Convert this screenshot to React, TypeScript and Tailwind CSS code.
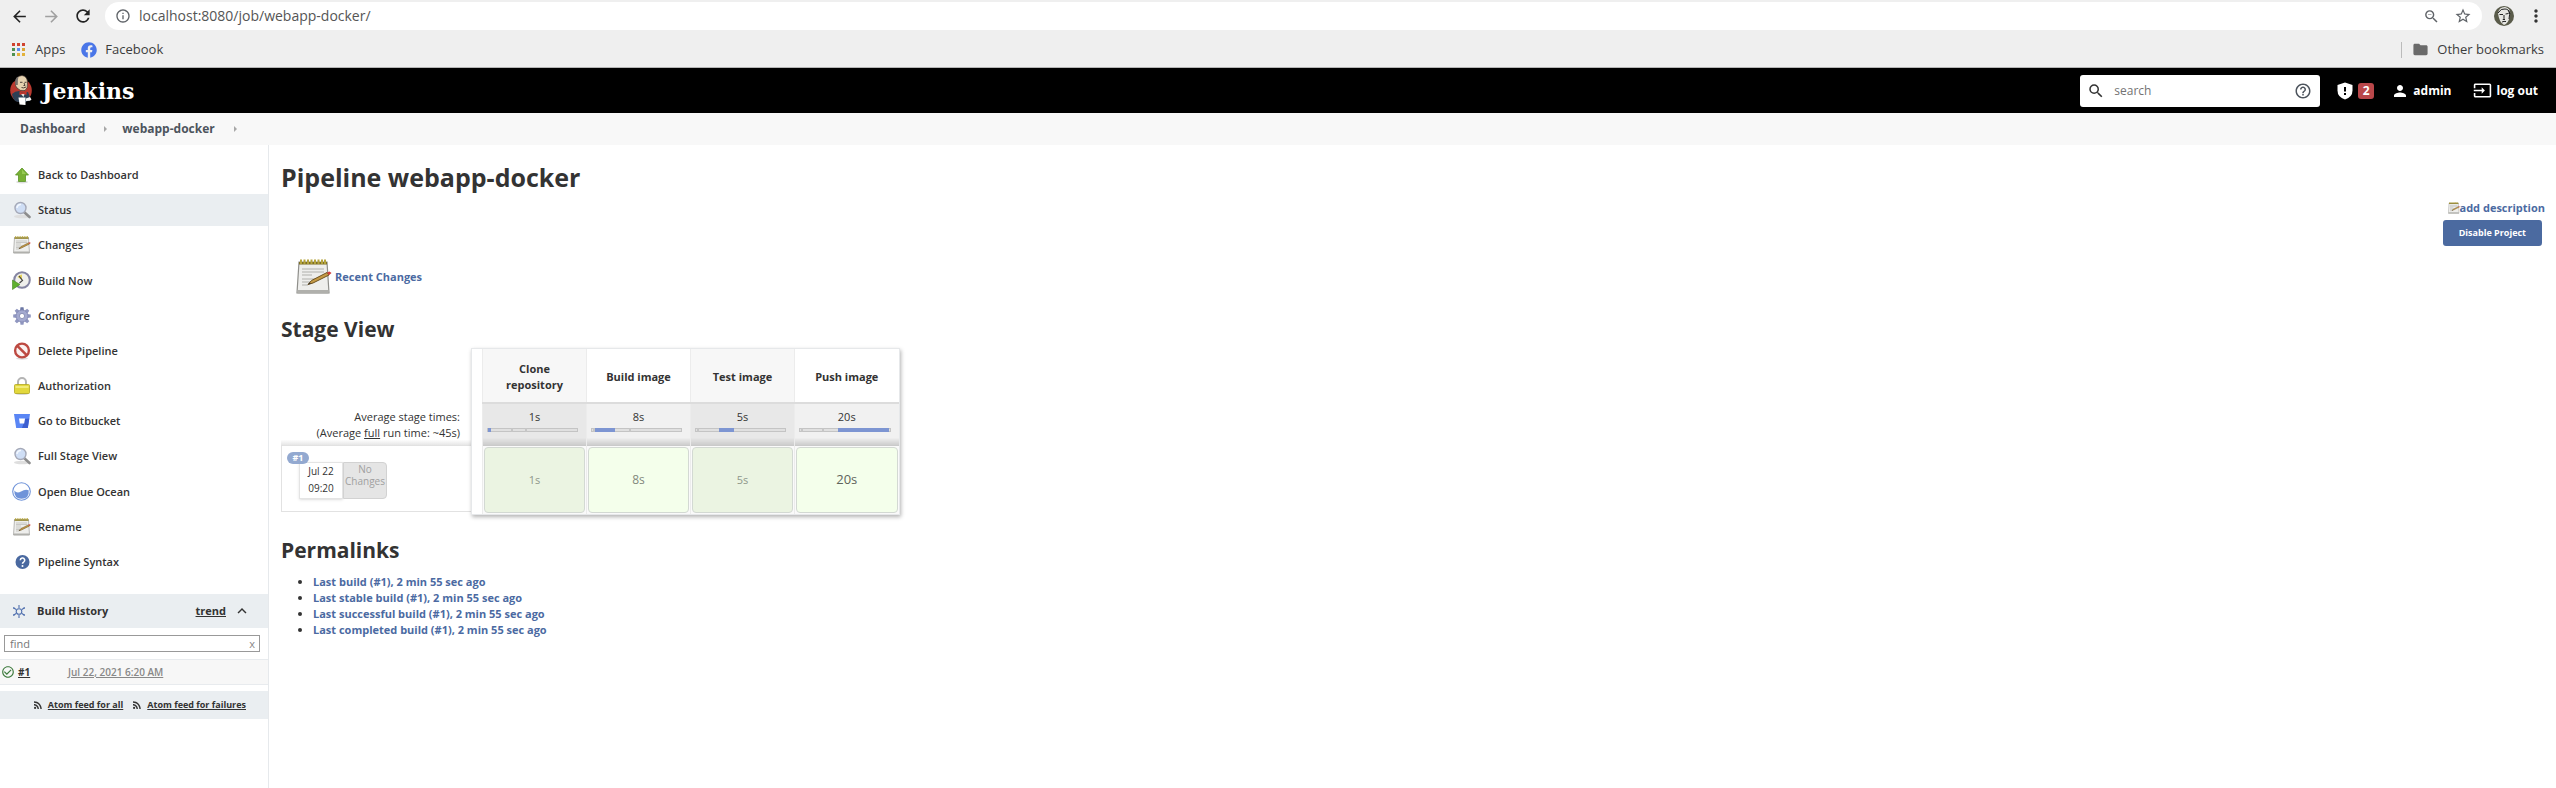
import type { ReactNode } from "react";
import {
  MdArrowBack,
  MdArrowForward,
  MdRefresh,
  MdInfoOutline,
  MdZoomOut,
  MdStarBorder,
  MdMoreVert,
  MdFolder,
  MdSearch,
  MdHelpOutline,
  MdPerson,
  MdRssFeed,
  MdInput,
  MdCheckCircleOutline,
  MdKeyboardArrowUp,
} from "react-icons/md";
import { FaFacebook } from "react-icons/fa";

const small = "h-[18px] w-[18px]";
const large = "h-[19px] w-[19px]";

function AppsGrid() {
  const colors = ["#d0432f", "#d0432f", "#d0432f", "#4f9150", "#5b8def", "#dba636", "#4f9150", "#e3b23b", "#e3b23b"];
  return (
    <svg viewBox="0 0 13 13" className="h-[13px] w-[13px]">
      {colors.map((c, i) => (
        <rect key={i} x={(i % 3) * 5} y={Math.floor(i / 3) * 5} width="3" height="3" fill={c} />
      ))}
    </svg>
  );
}

function Butler() {
  return (
    <svg viewBox="0 0 22 31" className="h-[31px] w-[22px]">
      <ellipse cx="11" cy="15.500" rx="10.800" ry="11.500" fill="#b8392f" />
      <path d="M2 19 Q5 16 9 16 L13 18 L18 17 Q20 20 19.500 25 L16 27 H8 Q3 26 2 19Z" fill="#2d4055" />
      <path d="M10 18 L12.500 19 L15 18 L13.500 22Z" fill="#e8e4df" />
      <path d="M5.500 8 Q5.500 1 12 0.500 Q17.500 1 17.500 8 Q18 13.500 15 15.500 Q10 16.500 7 13 Q5 11 5.500 8Z" fill="#e6d2b0" stroke="#3b302b" strokeWidth=".7" />
      <path d="M5.500 10 Q4 3 8.500 1.500 Q7.500 5 7.800 10Z" fill="#77716d" />
      <path d="M10 7.300h2.500M14.500 7.300h2M11.500 12.500q2 1 4.500-.5M14 8l1 2.500h-1.500" stroke="#3b302b" strokeWidth=".9" fill="none" />
      <path d="M9.500 16.500l3.500 1.500 3.500-1.500v3.500l-3.500-1.200-3.500 1.200Z" fill="#c5352c" />
      <path d="M8.500 22.500h7v7.500l-6-.5Z" fill="#fff" />
      <path d="M16 23.500l4-1.500 1.500 2.500-1.500 1.200-4 .3Z" fill="#f4f4f4" />
    </svg>
  );
}

function Avatar() {
  return (
    <svg viewBox="0 0 20 20" className="h-5 w-5">
      <circle cx="10" cy="10" r="10" fill="#5a5b4a" />
      <path d="M4 7q1-6 7-6 6 1 5 8-1 8-6 10-5-3-6-12Z" fill="#e6e6e2" />
      <path d="M4 7q3-5 7-4 4 0 5 5M5.500 8.500H9M11.500 8l3-.5M10 9v3.500l-1 1h2M8 16q2-1 4-.5M14.500 4q2 4 .5 9" stroke="#222" strokeWidth="1" fill="none" />
    </svg>
  );
}

function ShieldIcon() {
  return (
    <svg viewBox="0 0 16 18" className="h-[18px] w-4">
      <path d="M8 0.500 15.500 3v5.500Q15.500 15 8 17.500.5 15 .5 8.500V3Z" fill="#fff" />
      <path d="M7 5h2v4.500H7zM7 11h2v2H7z" fill="#000" />
    </svg>
  );
}

function UpArrowIcon() {
  return (
    <svg viewBox="0 0 18 18" className={small}>
      <ellipse cx="9" cy="16" rx="6" ry="1.500" fill="#ddd" />
      <path d="M9 2 15.500 9H12.500V15.500H5.500V9H2.500Z" fill="#79b135" stroke="#5a9426" strokeWidth=".8" />
      <path d="M9 3.500 13 8H9Z" fill="#98cb55" />
    </svg>
  );
}

function SearchGlassIcon() {
  return (
    <svg viewBox="0 0 18 18" className={small}>
      <ellipse cx="9" cy="15.500" rx="8" ry="1.800" fill="#dedede" />
      <path d="M11 11 16.500 16" stroke="#8d8d8d" strokeWidth="2.600" strokeLinecap="round" />
      <circle cx="7.500" cy="7" r="5.500" fill="#cfdef5" stroke="#a5a9b8" strokeWidth="1.400" />
      <path d="M4 7a3.500 3.500 0 0 1 4-3.500" stroke="#f3f8ff" strokeWidth="1.500" fill="none" />
    </svg>
  );
}

function NotepadIcon({ className = small }: { className?: string }) {
  return (
    <svg viewBox="0 0 36 36" className={className}>
      <path d="M3 3H31L33 34H1Z" fill="#eeeeec" stroke="#8f8f8b" strokeWidth="1.200" />
      <path d="M1.500 31H32.500V34.500H1.500Z" fill="#b0b0ac" />
      <path d="M3 3H31V5.500H3Z" fill="#7d6f24" />
      <path d="M5 .5V5M8.500 .5V5M12 .5V5M15.500 .5V5M19 .5V5M22.500 .5V5M26 .5V5M29 .5V5" stroke="#b5a43c" strokeWidth="2" />
      <path d="M6 10H28M6 13H28M6 16H16M6 20H20M6 23H15M6 26H12" stroke="#b0b0ac" strokeWidth="1.200" />
      <path d="M12 25.500 15.500 21.500 31 13.500 33 16 17 24Z" fill="#c59a45" stroke="#6e5220" strokeWidth="1" />
      <path d="M31 13.500 33.500 12.500 35.500 14 33 16.200Z" fill="#d0403b" />
      <path d="M12 25.500 13.500 23.500 15 24.700Z" fill="#333" />
    </svg>
  );
}

function ClockPlayIcon() {
  return (
    <svg viewBox="0 0 19 19" className={large}>
      <circle cx="10" cy="9" r="7.800" fill="#f0f0ec" stroke="#8585a2" strokeWidth="2" />
      <path d="M10 9V3.500A5.500 5.500 0 0 0 5.500 6Z" fill="#e6d25c" />
      <path d="M7 5l3.500 4.500L7.500 12" stroke="#444" strokeWidth="1.200" fill="none" />
      <path d="M0.500 9 8 13.500 0.500 18.500Z" fill="#5fb02f" stroke="#43871e" strokeWidth=".6" />
    </svg>
  );
}

function GearIcon() {
  const teeth = [0, 45, 90, 135, 180, 225, 270, 315];
  return (
    <svg viewBox="0 0 18 18" className={small}>
      {teeth.map((a) => (
        <path key={a} d="M7 4 7.500 .2H10.500L11 4Z" fill={a === 0 ? "#6a76a3" : "#9097c0"} transform={`rotate(${a} 9 9)`} />
      ))}
      <circle cx="9" cy="9" r="6" fill="#a3a9cf" stroke="#858cb5" strokeWidth=".8" />
      <circle cx="9" cy="9" r="2.600" fill="#fff" stroke="#7c83ab" strokeWidth=".8" />
    </svg>
  );
}

function ForbiddenIcon() {
  return (
    <svg viewBox="0 0 18 18" className={small}>
      <ellipse cx="9" cy="16.500" rx="6" ry="1.200" fill="#ddd" />
      <circle cx="9" cy="8.500" r="6.900" fill="#fbf3f2" stroke="#bd4a42" strokeWidth="2.400" />
      <path d="M4.300 3.800 13.700 13.200" stroke="#bd4a42" strokeWidth="2.600" />
    </svg>
  );
}

function LockIcon() {
  return (
    <svg viewBox="0 0 18 18" className={small}>
      <ellipse cx="9" cy="16.500" rx="7" ry="1.300" fill="#ccc" />
      <path d="M5 8V5a4 4 0 0 1 8 0V8" stroke="#b4b4b4" strokeWidth="2" fill="none" />
      <rect x="1.500" y="7.500" width="15" height="9" rx="1" fill="#e2d83c" stroke="#b3a71f" strokeWidth=".8" />
      <path d="M2.500 9h13v2h-13Z" fill="#f2eb79" />
    </svg>
  );
}

function BucketIcon() {
  return (
    <svg viewBox="0 0 18 18" className={small}>
      <path d="M1 2H17L14.800 16H3.200Z" fill="#5a86f5" />
      <path d="M17 2 14.800 16H9L12 7 16.200 6.500Z" fill="#3d5fd0" />
      <path d="M6 6.500H12L11.200 11.500H6.800Z" fill="#fff" />
    </svg>
  );
}

function OceanIcon() {
  return (
    <svg viewBox="0 0 19 19" className={large}>
      <circle cx="9.500" cy="9.500" r="8.800" fill="#fff" stroke="#6f93d9" strokeWidth="1.100" />
      <path d="M2.300 8.500Q5 12 9 9.500T16.700 8.200Q17.500 16.500 9.500 16.800 2 16.500 2.300 8.500Z" fill="#6f93d9" />
    </svg>
  );
}

function HelpIcon() {
  return (
    <svg viewBox="0 0 18 18" className={small}>
      <circle cx="9.500" cy="9" r="7" fill="#4a69a0" />
      <path d="M7.300 7.200a2.200 2.200 0 1 1 3.300 1.900q-1.100.6-1.100 1.700" stroke="#fff" strokeWidth="1.600" fill="none" />
      <circle cx="9.500" cy="12.900" r="1" fill="#fff" />
    </svg>
  );
}

function SunIcon() {
  return (
    <svg viewBox="0 0 12 13" className="h-[13px] w-3">
      <g fill="none" stroke="#4f6fae" strokeWidth="1.100">
        <circle cx="6" cy="6.500" r="2.800" />
        <path d="M6 0v3M6 10v3M1 3l2 1.500M11 3l-2 1.500M1 10l2-1.500M11 10 9 8.500M.8 2v2M11.200 2v2M.8 9v2M11.200 9v2" />
      </g>
    </svg>
  );
}

type Task = { label: string; icon: ReactNode; active?: boolean };

const tasks: Task[] = [
  { label: "Back to Dashboard", icon: <UpArrowIcon /> },
  { label: "Status", icon: <SearchGlassIcon />, active: true },
  { label: "Changes", icon: <NotepadIcon /> },
  { label: "Build Now", icon: <ClockPlayIcon /> },
  { label: "Configure", icon: <GearIcon /> },
  { label: "Delete Pipeline", icon: <ForbiddenIcon /> },
  { label: "Authorization", icon: <LockIcon /> },
  { label: "Go to Bitbucket", icon: <BucketIcon /> },
  { label: "Full Stage View", icon: <SearchGlassIcon /> },
  { label: "Open Blue Ocean", icon: <OceanIcon /> },
  { label: "Rename", icon: <NotepadIcon /> },
  { label: "Pipeline Syntax", icon: <HelpIcon /> },
];

type Stage = { name: string; time: string; from: number; to: number; ticks: number[]; run: string };

const stages: Stage[] = [
  { name: "Clone repository", time: "1s", from: 0, to: 3, ticks: [26, 42], run: "text-[11px] text-[#8f978b]" },
  { name: "Build image", time: "8s", from: 3, to: 26, ticks: [1, 42], run: "text-xs text-[#83897d]" },
  { name: "Test image", time: "5s", from: 26, to: 43, ticks: [1], run: "text-[11px] text-[#8f978b]" },
  { name: "Push image", time: "20s", from: 43, to: 100, ticks: [1, 25], run: "text-[13px] text-[#5f645b]" },
];

const permalinks = [
  "Last build (#1), 2 min 55 sec ago",
  "Last stable build (#1), 2 min 55 sec ago",
  "Last successful build (#1), 2 min 55 sec ago",
  "Last completed build (#1), 2 min 55 sec ago",
];

function BrowserBar() {
  return (
    <div className="border-b border-[#b5b5b5] bg-[#efefef] text-[13px] text-[#3c3c3c]">
      <div className="flex h-8 items-center pr-[10px] pl-[10px]">
        <button aria-label="Back" className="text-[#222]"><MdArrowBack size={19} /></button>
        <button aria-label="Forward" className="ml-[13px] text-[#a0a0a0]"><MdArrowForward size={19} /></button>
        <button aria-label="Reload" className="ml-3 text-[#222]"><MdRefresh size={20} /></button>
        <div className="ml-3 flex h-7 flex-1 items-center rounded-full bg-white pr-[10px] pl-[10px] text-[#5f6368]">
          <MdInfoOutline size={16} />
          <input
            aria-label="Address"
            className="ml-2 min-w-0 flex-1 bg-transparent text-sm text-[#555] outline-none"
            defaultValue="localhost:8080/job/webapp-docker/"
          />
          <MdZoomOut size={17} />
          <button aria-label="Bookmark this page" className="ml-[14px]"><MdStarBorder size={18} /></button>
        </div>
        <button aria-label="Profile" className="ml-3"><Avatar /></button>
        <button aria-label="Browser menu" className="ml-3 text-[#333]"><MdMoreVert size={20} /></button>
      </div>
      <div className="flex h-[35px] items-center pr-3 pl-3">
        <a href="#apps" className="flex items-center gap-[10px]"><AppsGrid />Apps</a>
        <a href="#facebook" className="ml-4 flex items-center gap-2"><FaFacebook size={16} color="#4a76e8" />Facebook</a>
        <a href="#bookmarks" className="ml-auto flex h-4 items-center gap-2 border-l border-[#bbb] pl-[10px]">
          <MdFolder size={17} color="#6a6a6a" />Other bookmarks
        </a>
      </div>
    </div>
  );
}

function Header() {
  return (
    <header className="flex h-[45px] items-center bg-black pr-[18px] pl-[10px] text-white">
      <a href="#home" className="flex items-center gap-[10px]">
        <Butler />
        <span className="font-['DejaVu_Serif',serif] text-[22px] leading-8 font-bold">Jenkins</span>
      </a>
      <div className="ml-auto flex h-8 w-60 items-center rounded-[3px] bg-white pr-2 pl-[7px] text-[#333]">
        <MdSearch size={18} />
        <input aria-label="Search" placeholder="search" className="ml-[9px] min-w-0 flex-1 bg-transparent text-xs outline-none placeholder:text-[#737373]" />
        <button aria-label="Search help" className="text-[#4d545d]"><MdHelpOutline size={18} /></button>
      </div>
      <a href="#warnings" aria-label="Security warnings" className="ml-[17px] flex items-center gap-[5px]">
        <ShieldIcon />
        <span className="h-4 w-4 rounded-[3px] bg-[#b9474a] text-center text-xs leading-4 font-bold">2</span>
      </a>
      <a href="#admin" className="ml-[17px] flex items-center gap-1 text-xs font-bold"><MdPerson size={18} />admin</a>
      <a href="#logout" className="ml-[22px] flex items-center gap-1 text-xs font-bold"><MdInput size={19} />log out</a>
    </header>
  );
}

function Crumb({ label }: { label: string }) {
  return (
    <li className="flex items-center gap-[19px]">
      <a href="#crumb">{label}</a>
      <span aria-hidden="true" className="border-y-3 border-l-3 border-y-transparent border-l-[#a8a8a8]" />
    </li>
  );
}

function Sidebar() {
  return (
    <aside className="w-[269px] shrink-0 border-r border-[#e6e9ec] pt-[14px]">
      <nav className="flex flex-col gap-[3px]">
        {tasks.map((t) => (
          <a
            key={t.label}
            href="#task"
            className={
              t.active
                ? "flex items-center gap-[7px] bg-[#eaeef1] py-[7px] pl-3 text-[11px] leading-4 font-semibold"
                : "flex items-center gap-[7px] py-[7px] pl-3 text-[11px] leading-4 font-semibold"
            }
          >
            <span className="flex w-[19px] justify-center">{t.icon}</span>
            {t.label}
          </a>
        ))}
      </nav>
      <section className="mt-4">
        <div className="flex h-[34px] items-center bg-[#eaeef1] pr-[17px] pl-[13px] text-[11px] font-bold">
          <SunIcon />
          <h2 className="ml-3">Build History</h2>
          <a href="#trend" className="ml-auto underline">trend</a>
          <button aria-label="Collapse" className="ml-[7px]"><MdKeyboardArrowUp size={18} /></button>
        </div>
        <div className="mt-[7px] mr-2 ml-1 flex h-[17px] items-center border border-[#999] bg-white pr-1 pl-[5px] text-[11px] text-[#888]">
          <input aria-label="Find build" placeholder="find" className="min-w-0 flex-1 bg-transparent leading-[15px] outline-none placeholder:text-[#777]" />
          <button aria-label="Clear" className="leading-3">x</button>
        </div>
        <div className="mt-[7px] flex h-[26px] items-center border-y border-[#e8ebee] bg-[#f7f7f7] pl-px text-[10px] font-bold">
          <MdCheckCircleOutline size={14} color="#3d7a3d" />
          <a href="#build" className="ml-[3px] w-[50px] underline">#1</a>
          <a href="#build" className="font-semibold text-[#888] underline">Jul 22, 2021 6:20 AM</a>
        </div>
        <div className="mt-[6px] flex h-7 items-center justify-end gap-2 bg-[#eaeef1] pr-[22px] text-[9px] font-bold">
          <a href="#all" className="flex items-center gap-1"><MdRssFeed size={12} /><span className="underline">Atom feed for all</span></a>
          <a href="#failures" className="flex items-center gap-1"><MdRssFeed size={12} /><span className="underline">Atom feed for failures</span></a>
        </div>
      </section>
    </aside>
  );
}

function StageView() {
  return (
    <div className="mt-[3px] flex items-end">
      <div className="mb-[3px] w-[190px]">
        <div className="bg-linear-to-t from-[#e6e6e6] to-white to-15% pr-[11px] pb-1 text-right text-[11px] leading-4 text-[#333]">
          <p>Average stage times:</p>
          <p>(Average <span className="underline">full</span> run time: ~45s)</p>
        </div>
        <div className="h-[67px] border border-r-0 border-[#e2e2e2] pt-[6px] pl-[5px]">
          <span className="relative z-10 block h-3 w-[22px] rounded-full bg-[#93a9d0] text-center text-[9px] leading-3 font-bold text-white">#1</span>
          <div className="-mt-[2px] ml-3 flex text-[10px]">
            <div className="h-[37px] w-11 border border-[#e4e4e4] bg-white text-center leading-[17px] text-[#333] shadow-sm">
              <p>Jul 22</p>
              <p>09:20</p>
            </div>
            <div className="h-[37px] w-11 rounded-r border border-[#d2d2d2] bg-[#e5e5e5] text-center leading-3 text-[#a0a0a0]">No Changes</div>
          </div>
        </div>
      </div>
      <div className="border border-[#e6e8ea] bg-white pl-[10px] shadow-[1px_2px_4px_rgba(0,0,0,0.3)]">
        <table className="table-fixed border-collapse text-center text-[11px] text-[#333]">
          <thead>
            <tr>
              {stages.map((s) => (
                <th key={s.name} className="h-[54px] w-[104px] border-l border-[#ececec] px-4 pt-[2px] leading-4 font-bold odd:bg-[#f7f7f7]">{s.name}</th>
              ))}
            </tr>
          </thead>
          <tbody>
            <tr>
              {stages.map((s) => (
                <td key={s.name} className="h-[43px] border-t-2 border-l border-t-[#dcdcdc] border-l-[#ececec] bg-[#f1f1f1] bg-linear-to-t from-[#c8c8c8] to-transparent to-20% p-0 pr-2 pl-1 align-top odd:bg-[#e8e8e8]">
                  <p className="mt-1 pl-1 leading-[18px]">{s.time}</p>
                  <div className="relative mt-[2px] h-1 border border-[#c4c4c4] bg-[#e0e0e0]">
                    {s.ticks.map((t) => (
                      <span key={t} className="absolute -top-px h-1 w-[2px] bg-[#c6c6c6]" style={{ left: `${t}%` }} />
                    ))}
                    <span className="absolute -top-px h-1 bg-[#7d95d2]" style={{ left: `${s.from}%`, width: `${s.to - s.from}%` }} />
                  </div>
                </td>
              ))}
            </tr>
            <tr>
              {stages.map((s) => (
                <td key={s.name} className="group h-[68px] border-l border-[#ececec] bg-[#fafafa] px-px py-px">
                  <div className={`flex h-[66px] items-center justify-center rounded border border-[#d3d9d3] bg-[#f4ffeb] group-odd:bg-[#ebf4e2] ${s.run}`}>{s.time}</div>
                </td>
              ))}
            </tr>
          </tbody>
        </table>
      </div>
    </div>
  );
}

export default function App() {
  return (
    <div className="flex min-h-screen flex-col bg-white font-['Open_Sans','Noto_Sans',sans-serif] text-[#333]">
      <BrowserBar />
      <Header />
      <ul className="flex h-8 items-center gap-[15px] bg-[#f8f8f8] pl-5 text-xs font-bold text-[#4d545d]">
        <Crumb label="Dashboard" />
        <Crumb label="webapp-docker" />
      </ul>
      <div className="flex flex-1">
        <Sidebar />
        <main className="flex-1 pt-[14px] pb-6 pl-3">
          <h1 className="text-[25px] leading-9 font-bold">Pipeline webapp-docker</h1>
          <div className="mt-[5px] flex flex-col items-end pr-[11px]">
            <a href="#description" className="flex items-center text-[11px] leading-4 font-bold text-[#4b6aa2]">
              <NotepadIcon className="h-3 w-3" />add description
            </a>
            <button className="mt-1 mr-[3px] h-[26px] rounded-[3px] bg-[#4b6aa0] px-4 text-[9px] font-bold text-white">Disable Project</button>
          </div>
          <a href="#changes" className="mt-[13px] ml-[15px] flex w-fit items-center gap-[3px] text-[11px] font-bold text-[#4b6aa2]">
            <NotepadIcon className="h-9 w-9" />Recent Changes
          </a>
          <h2 className="mt-[18px] text-[21px] leading-8 font-bold">Stage View</h2>
          <StageView />
          <h2 className="mt-[19px] text-[21px] leading-8 font-bold">Permalinks</h2>
          <ul className="mt-2 list-disc pl-8 text-[11px] leading-4 font-bold">
            {permalinks.map((p) => (
              <li key={p}><a href="#permalink" className="text-[#4b6aa2]">{p}</a></li>
            ))}
          </ul>
        </main>
      </div>
    </div>
  );
}
